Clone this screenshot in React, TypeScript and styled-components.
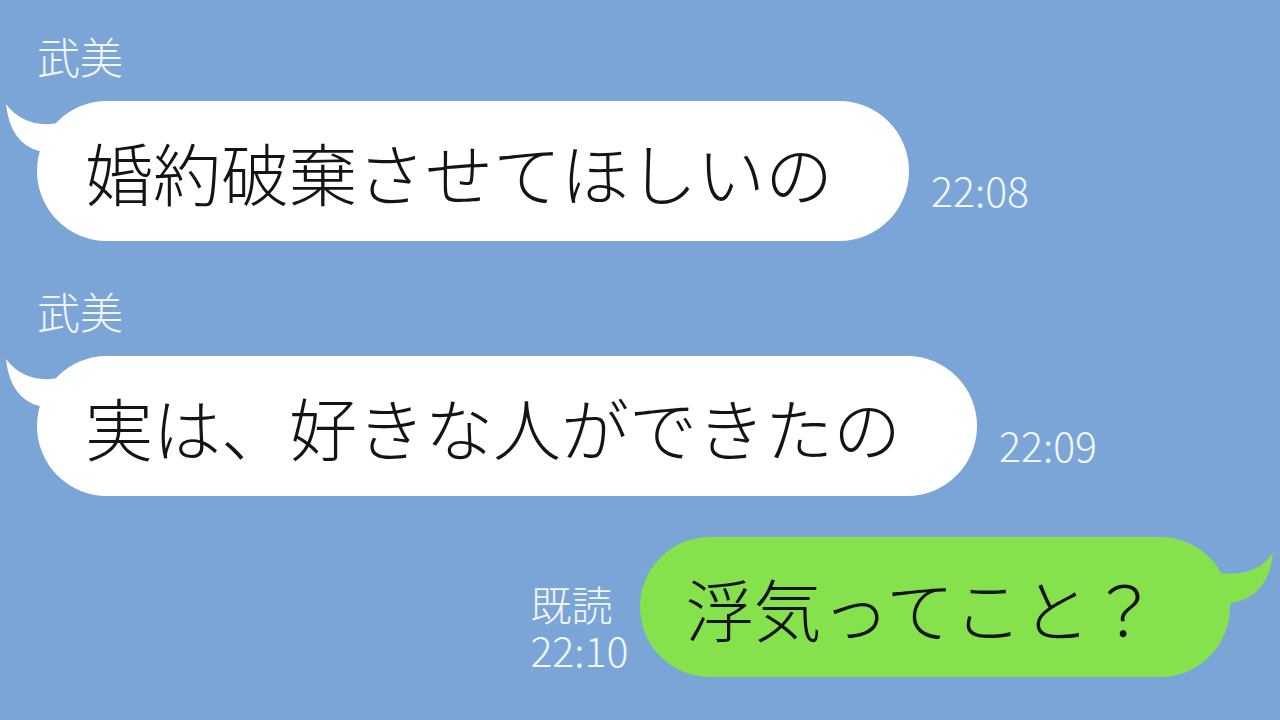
import styled, { createGlobalStyle } from "styled-components";

const GlobalStyle = createGlobalStyle`
    html, body {
        margin: 0;
        padding: 0;
        background: #7ba5d6;
    }
    body {
        font-family: "Noto Sans CJK JP", "Noto Sans", sans-serif;
    }
`;

type Side = "left" | "right";

export default function App() {
    return (
        <>
            <GlobalStyle />
            <Chat>
                <Name>武美</Name>
                <Row side="left">
                    <Bubble side="left">
                        <Tail side="left" />
                        婚約破棄させてほしいの
                    </Bubble>
                    <Meta>
                        <Time>22:08</Time>
                    </Meta>
                </Row>

                <Name>武美</Name>
                <Row side="left">
                    <Bubble side="left">
                        <Tail side="left" />
                        実は、好きな人ができたの
                    </Bubble>
                    <Meta>
                        <Time>22:09</Time>
                    </Meta>
                </Row>

                <Row side="right">
                    <Meta side="right">
                        <Time>既読</Time>
                        <Time>22:10</Time>
                    </Meta>
                    <Bubble side="right">
                        <Tail side="right" />
                        浮気ってこと？
                    </Bubble>
                </Row>
            </Chat>
        </>
    );
}

function Tail({ side }: { side: Side }) {
    if (side === "left") {
        return (
            <TailSvg side="left" width="60" height="60" viewBox="0 0 60 60">
                <path d="M1,1 Q20,26 54,20 L56,52 L34,48 Q5,40 1,1 Z" fill="#ffffff" />
            </TailSvg>
        );
    }
    return (
        <TailSvg side="right" width="60" height="70" viewBox="0 0 60 70">
            <path d="M57,13 Q42,38 6,34 L4,66 L16,64 Q53,58 57,13 Z" fill="#86e24c" />
        </TailSvg>
    );
}

const Chat = styled.div`
    display: flex;
    flex-direction: column;
    padding: 34px 50px 0 37px;
`;

const Name = styled.div`
    font-size: 43px;
    line-height: 43px;
    font-weight: 300;
    color: #f2f6fb;
    margin-bottom: 24px;
    &:not(:first-child) {
        margin-top: 48px;
    }
`;

const Row = styled.div<{ side: Side }>`
    display: flex;
    align-items: flex-end;
    justify-content: ${(p) => (p.side === "left" ? "flex-start" : "flex-end")};
    gap: ${(p) => (p.side === "left" ? "22px" : "12px")};
    margin-top: ${(p) => (p.side === "right" ? "41px" : "0")};
`;

const Bubble = styled.div<{ side: Side }>`
    position: relative;
    display: flex;
    align-items: center;
    height: 140px;
    box-sizing: border-box;
    border-radius: 70px;
    padding: ${(p) => (p.side === "left" ? "0 76px 0 48px" : "0 72px 0 45px")};
    background: ${(p) => (p.side === "left" ? "#ffffff" : "#86e24c")};
    color: #141414;
    font-size: 68px;
    font-weight: 300;
    white-space: nowrap;
`;

const TailSvg = styled.svg<{ side: Side }>`
    position: absolute;
    top: 2px;
    ${(p) => (p.side === "left" ? "left: -32px;" : "right: -46px;")}
`;

const Meta = styled.div<{ side?: Side }>`
    display: flex;
    flex-direction: column;
    align-items: flex-start;
    gap: 1px;
    margin-bottom: ${(p) => (p.side === "right" ? "5px" : "29px")};
`;

const Time = styled.div`
    font-size: 41px;
    line-height: 45px;
    font-weight: 300;
    color: #f2f6fb;
`;
